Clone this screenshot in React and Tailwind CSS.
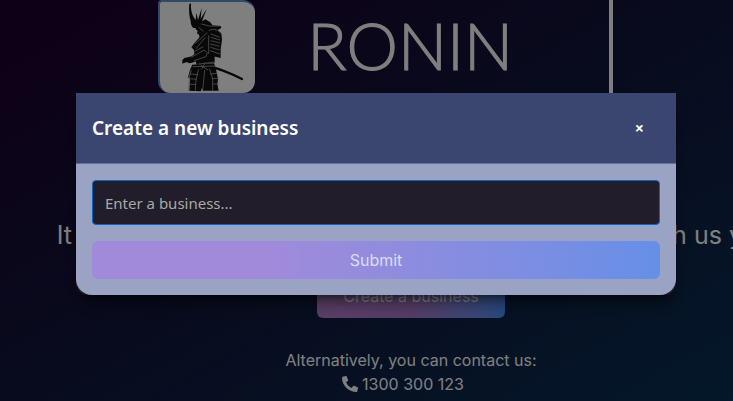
import React, { useState } from "react";
import { FaPhoneAlt } from "react-icons/fa";

const Samurai = () => (
  <svg viewBox="30 6 285 273" className="block h-[91px] w-[95px]" aria-hidden="true">
    <g fill="#101010">
      {/* helmet and crest */}
      <path d="M118 12l5-2c-1 18 2 36 14 50l2-22 5 22 11-36-3 32 18-30-14 38 10-6 14 8 8 10 24 2 2 6-14 8-34 2-16-2-10-8-10 0c-6-6-8-14-8-22-4-12-6-32-4-50z" />
      {/* face and neck */}
      <path d="M139 74l22 2 28 14-22 14-10 12-8-2-2-10-6-4 2-8-6-4z" />
      {/* chest */}
      <path d="M160 98l24-10 18 6 8 16-16 40 0 38-54 6-6-20-2-24-8-8 10-14 16-18z" />
      {/* back plates */}
      <path d="M174 94l26-6 14 12 2 20-4 28 0 26-36-8z" />
      {/* forearm and hand */}
      <path d="M160 150l10 8-2 14-20 8-22 8-10 2-4-4-8 2-7 3 0-10 6-7 14-3 8-2 16-12z" />
      {/* belt and hakama */}
      <path d="M126 194l66-4 6 18 6 30-2 14 4 20-48 0-2-8-4 10-34-2 2-36-6-4 6-22 6-14z" />
    </g>
    <path d="M180 200c34 8 66 22 96 37" fill="none" stroke="#101010" strokeWidth="7" strokeLinecap="round" />
    <g fill="none" stroke="#b4b4b4" strokeWidth="2.2">
      <path d="M154 72l24 6 30 0M146 82l14 12M176 92c14-8 32-4 40 14" />
      <path d="M176 106v56M182 102l28 10M182 112l28 8M182 122l28 7M181 132l28 7M181 142l28 8M180 152l30 10" />
      <path d="M172 98c-14 10-26 26-36 32M166 112l-28 34M134 154l26-14M124 172l38-22 10 8-4 12-36 12" />
      <path d="M146 192l50-6M128 200l70-2M152 196l22 14M166 188l-12 20" />
      <path d="M124 210l-6 18-2 44M146 208c-6 20-10 38-10 64M164 210l-6 62M178 206l10 30 0 36" />
      <path d="M120 222l24 2M118 236l22 2M116 252l22 2M180 222l24-2M186 236l20-1M188 252l18 0" />
    </g>
  </svg>
);

const BusinessModal = ({ onClose }) => {
  const [name, setName] = useState("");

  return (
    <div className="fixed inset-0 flex items-start justify-center bg-black/50 pt-[93px] pr-4 pl-[35px]">
      <div
        role="dialog"
        aria-labelledby="modal-title"
        className="w-full max-w-[600px] rounded-b-xl bg-[#211d2b] font-['Noto_Sans',sans-serif] shadow-lg shadow-black/50"
      >
        <div className="flex h-[71px] items-center justify-between border-b border-[#66709a] bg-[#3a466f] px-4 text-white">
          <h2 id="modal-title" className="text-[19px] font-semibold">
            Create a new business
          </h2>
          <button
            type="button"
            aria-label="Close"
            onClick={onClose}
            className="px-4 text-base font-bold"
          >
            ×
          </button>
        </div>
        <form
          className="space-y-4 rounded-b-2xl bg-[#9aa3c4] p-4"
          onSubmit={(e) => e.preventDefault()}
        >
          <input
            type="text"
            aria-label="Business name"
            placeholder="Enter a business..."
            value={name}
            onChange={(e) => setName(e.target.value)}
            className="block h-[45px] w-full rounded border border-[#0a66c2] bg-[#211d2b] px-3 text-[15px] text-white outline-none placeholder:text-[#aaa8a5]"
          />
          <button
            type="submit"
            className="block h-[38px] w-full rounded-md bg-linear-to-r from-[#a18ada] from-30% to-[#668fe7] font-['Inter',sans-serif] text-base text-[#dcdcef]"
          >
            Submit
          </button>
        </form>
      </div>
    </div>
  );
};

const App = () => {
  const [open, setOpen] = useState(true);

  return (
    <div className="min-h-screen overflow-hidden bg-linear-to-br from-[#1c002c] via-[#10163c] to-[#063054] font-['Inter',sans-serif] text-white">
      {/* the content column is wider than the window on small screens */}
      <main className="flex w-[calc(100%+89px)] flex-col items-center pb-1">
        <div className="flex h-[199px] w-[404px] items-start justify-between border-r-4 border-white pr-24">
          <div className="-ml-[51px] overflow-hidden rounded-xl rounded-tl-sm border-t-2 border-l-2 border-[#6490d0] bg-white">
            <Samurai />
          </div>
          <span className="font-['Lato',sans-serif] text-[65px] leading-[90px] font-light [-webkit-text-stroke:1px_white]">
            RONIN
          </span>
        </div>
        <p className="mt-4 whitespace-nowrap text-[25px] leading-10">
          It looks like you don't have a business registered with us yet
        </p>
        <button
          type="button"
          onClick={() => setOpen(true)}
          className="mt-[18px] h-[45px] w-[188px] rounded-md bg-linear-to-r from-[#b47ccc] via-[#a878c8] to-[#4a92ff] text-base"
        >
          Create a business
        </button>
        <div className="mt-[30px] text-center text-base">
          <p>Alternatively, you can contact us:</p>
          <p className="flex items-center justify-center gap-1 pr-4">
            <FaPhoneAlt />
            <a href="tel:1300300123">1300 300 123</a>
          </p>
        </div>
      </main>
      {open && <BusinessModal onClose={() => setOpen(false)} />}
    </div>
  );
};

export default App;
